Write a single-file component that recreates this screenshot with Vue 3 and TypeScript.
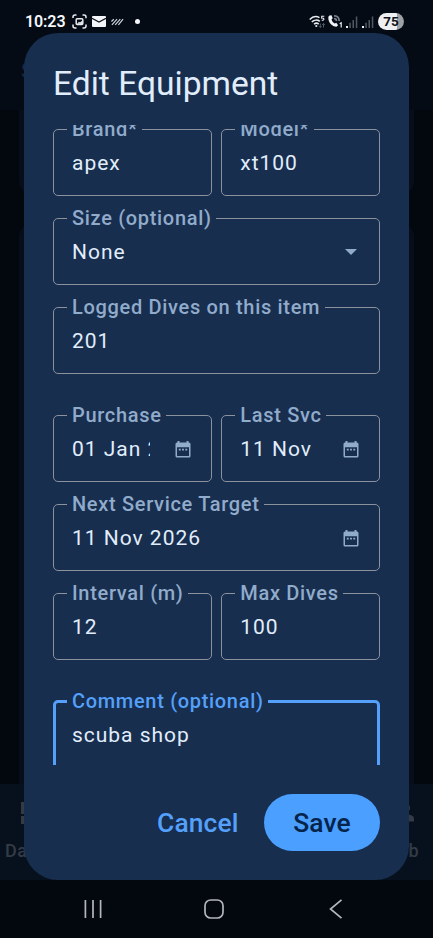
<script setup lang="ts">
interface Field {
  label: string
  value: string
  icon?: 'date' | 'menu'
  clipped?: boolean
  focused?: boolean
}

interface Row {
  fields: Field[]
  spaced?: boolean
}

const rows: Row[] = [
  { fields: [{ label: 'Brand*', value: 'apex' }, { label: 'Model*', value: 'xt100' }] },
  { fields: [{ label: 'Size (optional)', value: 'None', icon: 'menu' }] },
  { fields: [{ label: 'Logged Dives on this item', value: '201' }] },
  {
    spaced: true,
    fields: [
      { label: 'Purchase', value: '01 Jan 2025', icon: 'date', clipped: true },
      { label: 'Last Svc', value: '11 Nov', icon: 'date' },
    ],
  },
  { fields: [{ label: 'Next Service Target', value: '11 Nov 2026', icon: 'date' }] },
  { fields: [{ label: 'Interval (m)', value: '12' }, { label: 'Max Dives', value: '100' }] },
  { spaced: true, fields: [{ label: 'Comment (optional)', value: 'scuba shop', focused: true }] },
]
</script>

<template>
  <div class="screen">
    <header class="status">
      <div class="status-left">
        <span class="clock">10:23</span>
        <svg class="ic-shot" width="15" height="15" viewBox="0 0 15 15" fill="none" stroke="#e8ebf0" stroke-width="1.5">
          <path d="M1 4V3a2 2 0 0 1 2-2h1.5M10.500 1H12a2 2 0 0 1 2 2v1.200M14 10.500V12a2 2 0 0 1-2 2h-1.500M4.500 14H3a2 2 0 0 1-2-2v-1.500" />
          <rect x="4.200" y="4.700" width="6.600" height="5.800" rx="1" />
          <path d="M5 9.800l2-2 1 .8 1.500-1.600 1 1.500v1.600z" fill="#e8ebf0" stroke="none" />
        </svg>
        <svg class="ic-mail" width="14" height="11" viewBox="0 0 14 11">
          <rect width="14" height="11" rx="1" fill="#f3f5f8" />
          <path d="M0 2.200l7 3.800 7-3.800" fill="none" stroke="#10151e" stroke-width="1.200" />
        </svg>
        <svg class="ic-lines" width="13" height="8" viewBox="0 0 14 8" stroke="#cdd2da" stroke-width="1.300">
          <path d="M.5 3.500L3 1M1 7l5.500-6M4.500 7L10 1M8 7l5-6" />
        </svg>
        <span class="dot"></span>
      </div>
      <div class="status-right">
        <svg class="ic-wifi" width="17" height="14" viewBox="0 0 17 14" fill="none" stroke="#e8ebf0" stroke-width="1.500">
          <path d="M.7 4.500C3.500 1.500 7.500 1 10.500 2.600M2.800 7c2.200-2.300 5.600-2.500 8-.6M5 9.300c1.400-1.300 3.300-1.400 4.700-.2" />
          <circle cx="7.300" cy="11" r="1.100" fill="#e8ebf0" stroke="none" />
          <path d="M15.300 1.200h-2.600v1.900c2.900-.4 2.900 2.500 0 2.100" stroke-width="1.100" />
          <path d="M11.300 8.500v4M10 11.200l1.300 1.400 1.300-1.400M14.500 12.500v-4M13.200 9.900l1.300-1.400 1.300 1.400" stroke="#515965" stroke-width="1" />
        </svg>
        <svg class="ic-call" width="15" height="13" viewBox="0 0 15 13">
          <path d="M1.500.5L3.500.2l1.200 3-1.200 1.200c.6 1.800 1.700 3.200 3.200 4.200l1.600-.8 1.800 2.400-1.600 1.600C3.500 11.500-.5 6.500.5 1.500z" fill="#f0f2f5" />
          <path d="M6 1c3-.5 5.500 2 5 5M6 3.500c1.500 0 2.500 1 2.500 2.500" fill="none" stroke="#7c828c" stroke-width="1.700" />
          <path d="M11.700 8.800l1.500-1v4.800" fill="none" stroke="#e8ebf0" stroke-width="1.200" />
        </svg>
        <svg v-for="n in 2" :key="n" class="ic-signal" width="12" height="12" viewBox="0 0 12 12">
          <path d="M0 10h2v2H0z" fill="#f0f2f5" />
          <path d="M3.300 6.800h1.500V12H3.300zM6.500 4H8v8H6.500zM9.800.5h1.500V12H9.800z" fill="#525963" />
        </svg>
        <span class="battery">75</span>
      </div>
    </header>

    <main class="page">
      <span class="page-title">S</span>
      <section class="card card-first"></section>
      <section class="card card-second"></section>
      <nav class="tabs">
        <div class="tab tab-start">
          <svg width="22" height="22" viewBox="0 0 22 22" fill="#343b45">
            <path d="M0 0h10v12H0zM12 0h10v7H12zM0 14h10v8H0zM12 9h10v13H12z" />
          </svg>
          <span>Dash</span>
        </div>
        <div class="tab tab-end">
          <svg width="22" height="22" viewBox="0 0 22 22" fill="#343b45">
            <circle cx="13" cy="6" r="5" />
            <path d="M3 19.500v-3c0-6 19-6 19 0v3z" />
          </svg>
          <span>Club</span>
        </div>
      </nav>
    </main>

    <footer class="sysnav">
      <svg width="20" height="20" viewBox="0 0 20 20" stroke="#b3b6bb" stroke-width="1.700">
        <path d="M2.400 1v18M10 1v18M17.600 1v18" />
      </svg>
      <svg width="20" height="20" viewBox="0 0 20 20" fill="none" stroke="#b3b6bb" stroke-width="1.700">
        <rect x="1" y="1" width="18" height="18" rx="5.800" />
      </svg>
      <svg width="20" height="20" viewBox="0 0 20 20" fill="none" stroke="#b3b6bb" stroke-width="1.700">
        <path d="M15.500 .8L4.500 10l11 9.200" />
      </svg>
    </footer>

    <div class="dialog">
      <h1>Edit Equipment</h1>
      <div class="scroller">
        <div v-for="(row, i) in rows" :key="i" class="row" :class="{ spaced: row.spaced }">
          <fieldset v-for="f in row.fields" :key="f.label" :class="{ focused: f.focused }">
            <legend>{{ f.label }}</legend>
            <div class="control">
              <span class="value" :class="{ clipped: f.clipped }">{{ f.value }}</span>
              <svg v-if="f.icon === 'date'" class="date" width="16" height="17" viewBox="0 0 16 17">
                <path fill="#91abcb" fill-rule="evenodd" d="M2.500 0h2v1.500h7V0h2v1.500h.5a1.500 1.500 0 0 1 1.500 1.500v12a1.500 1.500 0 0 1-1.500 1.500H2A1.500 1.500 0 0 1 .5 15V3A1.500 1.500 0 0 1 2 1.500h.5zM2 6.200V15h12V6.200z" />
                <path fill="#91abcb" d="M3.800 7.800h1.900v1.700H3.800zM7.050 7.800h1.900v1.700h-1.900zM10.300 7.800h1.900v1.700h-1.900z" />
              </svg>
              <svg v-if="f.icon === 'menu'" class="menu" width="12" height="6" viewBox="0 0 12 6">
                <path fill="#91abcb" d="M0 0h12L6 6z" />
              </svg>
            </div>
          </fieldset>
        </div>
      </div>
      <div class="actions">
        <button class="cancel">Cancel</button>
        <button class="save">Save</button>
      </div>
    </div>
  </div>
</template>

<style>
body {
  background: #03070e;
}
</style>

<style scoped>
* {
  box-sizing: border-box;
}
.screen {
  position: relative;
  display: flex;
  flex-direction: column;
  width: 433px;
  height: 938px;
  overflow: hidden;
  background: #03070e;
  font-family: Roboto, sans-serif;
}
.status {
  display: flex;
  justify-content: space-between;
  height: 43px;
  padding: 0 29px 0 25px;
  background: #040b15;
}
.status-left,
.status-right {
  display: flex;
  align-items: center;
  height: 43px;
}
.clock {
  width: 47px;
  color: #f5f7fa;
  font-size: 16px;
  font-weight: 600;
  letter-spacing: -0.1px;
}
.ic-mail {
  margin-left: 5px;
}
.ic-lines {
  margin-left: 5px;
}
.dot {
  width: 5px;
  height: 5px;
  margin-left: 11px;
  border-radius: 50%;
  background: #f5f7fa;
}
.ic-call {
  margin-left: 2px;
}
.ic-signal {
  margin-left: 4px;
}
.ic-call + .ic-signal {
  margin-left: 3px;
}
.battery {
  width: 26px;
  height: 17px;
  margin-left: 4px;
  border-radius: 9px;
  background: linear-gradient(90deg, #eeeff1 75%, #9da0a5 75%);
  color: #10141b;
  font-size: 13.500px;
  font-weight: 700;
  line-height: 17px;
  text-align: center;
}
.page {
  display: flex;
  flex-direction: column;
  height: 837px;
}
.page-title {
  height: 67px;
  padding: 16px 0 0 21px;
  background: #040b15;
  color: #142943;
  font-size: 20px;
}
.card {
  margin: 0 19px;
  background: #070e19;
}
.card-first {
  height: 85px;
  border-radius: 0 0 14px 14px;
}
.card-second {
  flex: 1;
  margin-top: 28px;
  border-radius: 14px 14px 0 0;
}
.tabs {
  display: flex;
  justify-content: space-between;
  height: 96px;
  padding: 18px 14px 0 5px;
  background: #07111e;
}
.tab {
  display: flex;
  flex-direction: column;
  gap: 15px;
  color: #343b45;
  font-size: 18px;
  font-weight: 500;
  line-height: 24px;
  letter-spacing: 0.5px;
}
.tab-start svg {
  margin-left: 16px;
}
.tab-end {
  align-items: flex-end;
}
.tab-end svg {
  margin-right: 5px;
}
.sysnav {
  display: flex;
  align-items: center;
  height: 58px;
  padding: 0 0 1px 83px;
  background: #03070e;
}
.sysnav svg + svg {
  margin-left: 101px;
}
.sysnav svg + svg + svg {
  margin-left: 102px;
}
.dialog {
  position: absolute;
  top: 33px;
  left: 24px;
  display: flex;
  flex-direction: column;
  width: 385px;
  height: 847px;
  padding: 0 29px;
  border-radius: 34px;
  background: #172e4f;
}
h1 {
  height: 92px;
  margin: 0;
  padding-top: 30px;
  color: #e1edfb;
  font-size: 33.600px;
  font-weight: 400;
  line-height: 42px;
  white-space: nowrap;
}
.scroller {
  height: 640px;
  overflow: hidden;
}
.row {
  display: flex;
  gap: 9.500px;
  margin-top: 12px;
}
.row:first-child {
  margin-top: -6px;
}
.row.spaced {
  margin-top: 31px;
}
fieldset {
  flex: 1;
  min-width: 0;
  height: 77px;
  margin: 0;
  padding: 0 18px;
  border: 1px solid #8b919d;
  border-radius: 5px;
}
legend {
  height: 21px;
  margin-left: -5px;
  padding: 0 4.500px 0 5px;
  color: #91abcb;
  font-size: 20px;
  font-weight: 500;
  line-height: 20.500px;
  letter-spacing: 0.68px;
  white-space: nowrap;
}
.control {
  display: flex;
  justify-content: space-between;
  align-items: center;
  height: 46px;
}
.value {
  color: #e1edfb;
  font-size: 21px;
  line-height: 25px;
  letter-spacing: 0.98px;
  white-space: nowrap;
}
.value.clipped {
  width: 77.500px;
  overflow: hidden;
}
.date {
  margin-right: 2px;
}
.menu {
  margin-right: 4px;
}
fieldset.focused {
  height: 140px;
  padding-left: 16px;
  border: 3px solid #54a0fa;
}
fieldset.focused legend {
  color: #54a0fa;
}
.actions {
  display: flex;
  justify-content: flex-end;
  margin-top: 29px;
}
button {
  height: 57px;
  padding: 0;
  border: 0;
  background: none;
  font-family: inherit;
  font-size: 26.400px;
  font-weight: 500;
  letter-spacing: 0.1px;
}
.cancel {
  margin-right: 25.500px;
  color: #54a0fa;
}
.save {
  width: 116px;
  border-radius: 29px;
  background: #4b9fff;
  color: #04244c;
}
</style>
